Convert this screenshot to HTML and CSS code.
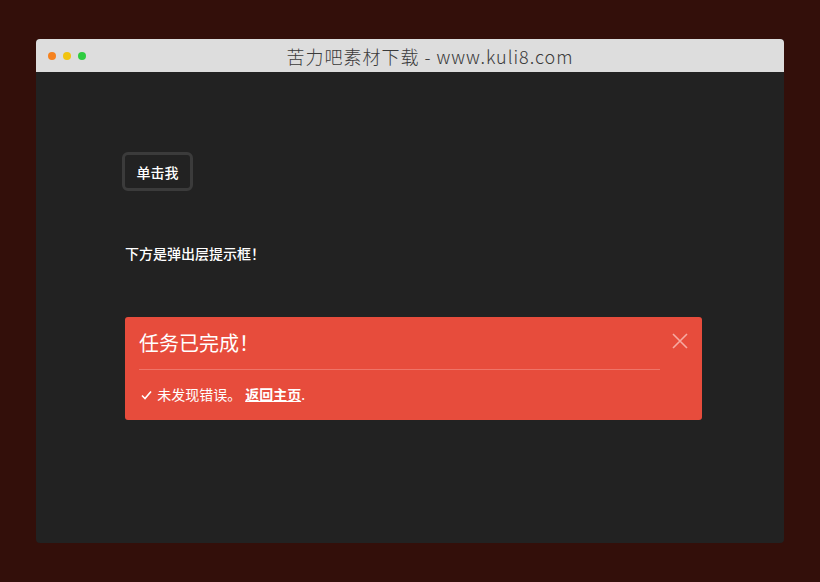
FILE: index.html
```html
<!DOCTYPE html>
<html lang="zh-CN">
<head>
  <meta charset="UTF-8" />
  <title>苦力吧素材下载</title>
  <link rel="stylesheet" href="styles.css">
</head>
<body>
  <div class="window">
    <div class="titlebar">
      <div class="dots">
        <span class="dot orange"></span>
        <span class="dot yellow"></span>
        <span class="dot green"></span>
      </div>
      <div class="title">苦力吧素材下载 - www.kuli8.com</div>
    </div>
    <div class="content">
      <button class="btn">单击我</button>
      <p class="tip">下方是弹出层提示框！</p>

      <!-- 弹出层 -->
      <div class="alert">
        <div class="alert-head">
          <h3>任务已完成！</h3>
          <span class="close">
            <svg width="16" height="16" viewBox="0 0 16 16"><path d="M1 1L15 15M15 1L1 15" stroke="currentColor" stroke-width="1.6" fill="none"/></svg>
          </span>
        </div>
        <hr>
        <p class="alert-body">
          <svg class="check" width="11" height="10" viewBox="0 0 11 10"><path d="M1 5.5L4 8.5L10 1.5" stroke="currentColor" stroke-width="1.6" fill="none"/></svg>
          未发现错误。<a href="#">返回主页</a>.
        </p>
      </div>
    </div>
  </div>
</body>
</html>
```

FILE: styles.css
```css
* { box-sizing: border-box; }
body {
  margin: 0;
  background: #330f0a;
  font-family: "Microsoft YaHei", "Noto Sans CJK SC", "Liberation Sans", sans-serif;
  padding: 39px 36px 0 36px;
  height: 582px;
}
.window {
  width: 748px;
  height: 504px;
  border-radius: 4px;
  overflow: hidden;
  background: #222;
  display: flex;
  flex-direction: column;
}
.titlebar {
  height: 33px;
  background: #dddddd;
  display: flex;
  align-items: center;
  position: relative;
}
.dots {
  display: flex;
  gap: 7px;
  padding-left: 12px;
}
.dot {
  width: 8px;
  height: 8px;
  border-radius: 50%;
}
.orange { background: #f5821f; }
.yellow { background: #f1c40f; }
.green { background: #2ecc40; }
.title {
  position: absolute;
  left: 0; right: 0;
  text-align: center;
  font-size: 18px;
  font-weight: 300;
  letter-spacing: 1px;
  color: #3a3a3a;
  padding-left: 40px;
}
.content {
  flex: 1;
  padding: 80px 0 0 86px;
}
.btn {
  display: block;
  background: #222;
  color: #fff;
  border: 3px solid #3b3b3b;
  border-radius: 6px;
  width: 71px;
  height: 39px;
  font-family: inherit;
  font-size: 14px;
  font-weight: 500;
  padding: 0;
}
.tip {
  margin: 52px 0 0 3px;
  color: #fff;
  font-size: 14px;
  font-weight: 500;
}
.alert {
  margin: 54px 0 0 3px;
  width: 577px;
  height: 103px;
  background: #e74c3c;
  border-radius: 3px;
  padding: 12px 14px 0 14px;
  color: #fff;
}
.alert-head {
  display: flex;
  justify-content: space-between;
  align-items: flex-start;
}
.alert h3 {
  margin: 0;
  font-size: 20px;
  font-weight: normal;
  line-height: 28px;
}
.close {
  color: #f6aaa2;
  margin-top: 4px;
  line-height: 0;
}
hr {
  border: none;
  border-top: 1px solid #ef7468;
  margin: 12px 28px 0 0;
}
.alert-body {
  margin: 14px 0 0 2px;
  font-size: 14px;
  line-height: 20px;
}
.check {
  margin-right: 2px;
}
.alert-body a {
  color: #fff;
  font-weight: bold;
  text-decoration: underline;
  margin-left: 4px;
}
```
